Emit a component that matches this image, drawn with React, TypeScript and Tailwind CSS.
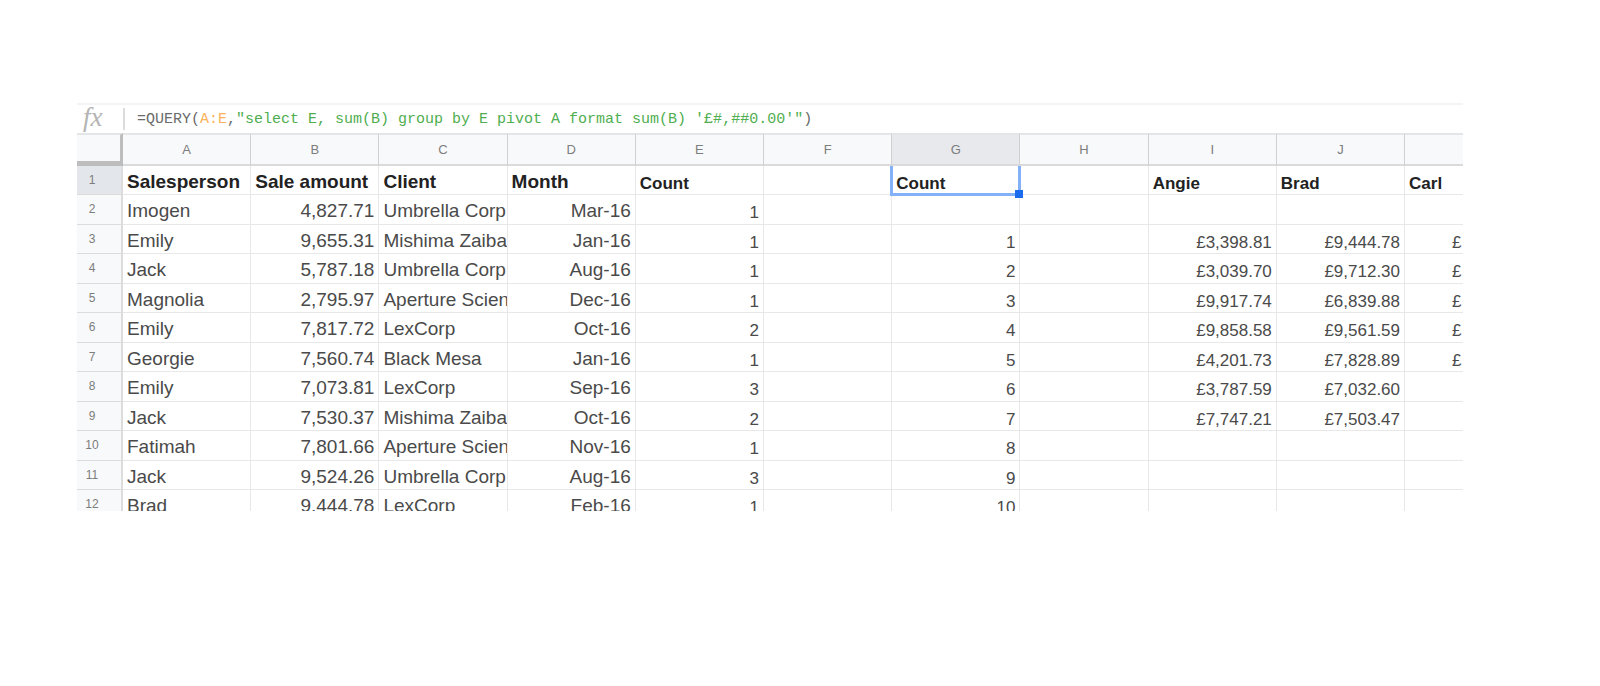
import React from "react";

const columns = ["A", "B", "C", "D", "E", "F", "G", "H", "I", "J", ""];

const rows: string[][] = [
  ["Salesperson", "Sale amount", "Client", "Month", "Count", "", "Count", "", "Angie", "Brad", "Carl"],
  ["Imogen", "4,827.71", "Umbrella Corp", "Mar-16", "1", "", "", "", "", "", ""],
  ["Emily", "9,655.31", "Mishima Zaibatsu", "Jan-16", "1", "", "1", "", "£3,398.81", "£9,444.78", "£"],
  ["Jack", "5,787.18", "Umbrella Corp", "Aug-16", "1", "", "2", "", "£3,039.70", "£9,712.30", "£"],
  ["Magnolia", "2,795.97", "Aperture Science", "Dec-16", "1", "", "3", "", "£9,917.74", "£6,839.88", "£"],
  ["Emily", "7,817.72", "LexCorp", "Oct-16", "2", "", "4", "", "£9,858.58", "£9,561.59", "£"],
  ["Georgie", "7,560.74", "Black Mesa", "Jan-16", "1", "", "5", "", "£4,201.73", "£7,828.89", "£"],
  ["Emily", "7,073.81", "LexCorp", "Sep-16", "3", "", "6", "", "£3,787.59", "£7,032.60", ""],
  ["Jack", "7,530.37", "Mishima Zaibatsu", "Oct-16", "2", "", "7", "", "£7,747.21", "£7,503.47", ""],
  ["Fatimah", "7,801.66", "Aperture Science", "Nov-16", "1", "", "8", "", "", "", ""],
  ["Jack", "9,524.26", "Umbrella Corp", "Aug-16", "3", "", "9", "", "", "", ""],
  ["Brad", "9,444.78", "LexCorp", "Feb-16", "1", "", "10", "", "", "", ""],
];

const SELECTED_COLUMN = 6;

// Source data (A–D) is set larger than the computed columns.
function textClass(col: number) {
  return col < 4 ? "pt-1 text-[19px] leading-6" : "pt-2 text-[17px] leading-5";
}

function alignClass(row: number, col: number) {
  if (col === 10 && row > 0) return "pl-[47px]";
  if (row === 0 || col === 0 || col === 2) return "pl-1";
  return "pr-1 text-right";
}

function FormulaBar() {
  return (
    <div className="flex h-[30px] items-center border-t-2 border-[#f3f4f5]">
      <span
        aria-hidden="true"
        className="w-[46px] pb-1 pl-1.5 font-['Liberation_Serif',serif] text-[27px] leading-6 text-[#b4b4b4] italic"
      >
        fx
      </span>
      <div
        role="textbox"
        aria-label="Formula"
        className="flex h-[22px] flex-1 items-center overflow-hidden border-l-2 border-[#dcdcdc] pt-0.5 pl-3 font-['Liberation_Mono',monospace] text-[15px] whitespace-pre text-[#6b6b6b]"
      >
        <span>=QUERY(</span>
        <span className="text-[#fbb25c]">A:E</span>
        <span>,</span>
        <span className="text-[#4fae50]">
          {"\"select E, sum(B) group by E pivot A format sum(B) '£#,##0.00'\""}
        </span>
        <span>)</span>
      </div>
    </div>
  );
}

function Cell({ row, col, value }: { row: number; col: number; value: string }) {
  const selected = row === 0 && col === SELECTED_COLUMN;
  const last = row === rows.length - 1;
  return (
    <td
      className={`p-0 align-top ${col < 10 ? "border-r" : ""} ${last ? "" : "border-b"} border-[#e8e8e8] ${
        selected ? "relative" : ""
      }`}
    >
      <div
        className={`overflow-hidden whitespace-nowrap ${last ? "h-[21px]" : "h-7"} ${textClass(col)} ${alignClass(
          row,
          col,
        )} ${row === 0 ? "font-bold text-[#222]" : "text-[#4a4a4a]"}`}
      >
        {value}
      </div>
      {selected && (
        <>
          <div className="absolute -inset-x-0.5 top-0 -bottom-0.5 border-x-[3px] border-b-[3px] border-[#82b1f9]" />
          <div className="absolute -right-1 -bottom-1 size-2 bg-[#1a6bee]" />
        </>
      )}
    </td>
  );
}

export default function App() {
  return (
    <main className="min-h-screen bg-white pt-[103px] pr-[137px] pl-[77px] font-['Liberation_Sans',Arial,sans-serif]">
      <FormulaBar />
      <table className="w-full table-fixed border-separate border-spacing-0">
        <colgroup>
          <col className="w-[46px]" />
          {columns.map((_, i) => (
            <col key={i} className={i < 10 ? "w-[9.25%]" : ""} />
          ))}
        </colgroup>
        <thead>
          <tr className="h-[33px]">
            <td className="border-t-2 border-r-[3px] border-b-[5px] border-t-[#e4e5e6] border-r-[#bdbdbd] border-b-[#bdbdbd] bg-[#f8f9fa] p-0" />
            {columns.map((name, i) => (
              <th
                key={i}
                scope="col"
                className={`border-t-2 border-b-2 border-t-[#e4e5e6] border-b-[#dadada] p-0 text-[13px] leading-5 font-normal text-[#7d7d7d] ${
                  i < 10 ? "border-r border-r-[#d0d0d0]" : ""
                } ${i === SELECTED_COLUMN ? "bg-[#e7e9ed]" : "bg-[#f8f9fa]"}`}
              >
                {name}
              </th>
            ))}
          </tr>
        </thead>
        <tbody>
          {rows.map((cells, r) => (
            <tr key={r} className={r === 11 ? "h-[21px]" : r % 2 === 1 ? "h-[30px]" : "h-[29px]"}>
              <th
                scope="row"
                className={`border-r-2 border-[#dcdcdc] p-0 pr-3.5 align-top text-[12px] font-normal text-[#7d7d7d] ${
                  r === 11 ? "" : "border-b"
                } ${r === 0 ? "bg-[#e3e6eb]" : "bg-[#f8f9fa]"}`}
              >
                <div className={r === 11 ? "h-[21px] pt-1.5 leading-4" : "h-7 pt-1.5 leading-4"}>{r + 1}</div>
              </th>
              {cells.map((value, c) => (
                <Cell key={c} row={r} col={c} value={value} />
              ))}
            </tr>
          ))}
        </tbody>
      </table>
    </main>
  );
}
